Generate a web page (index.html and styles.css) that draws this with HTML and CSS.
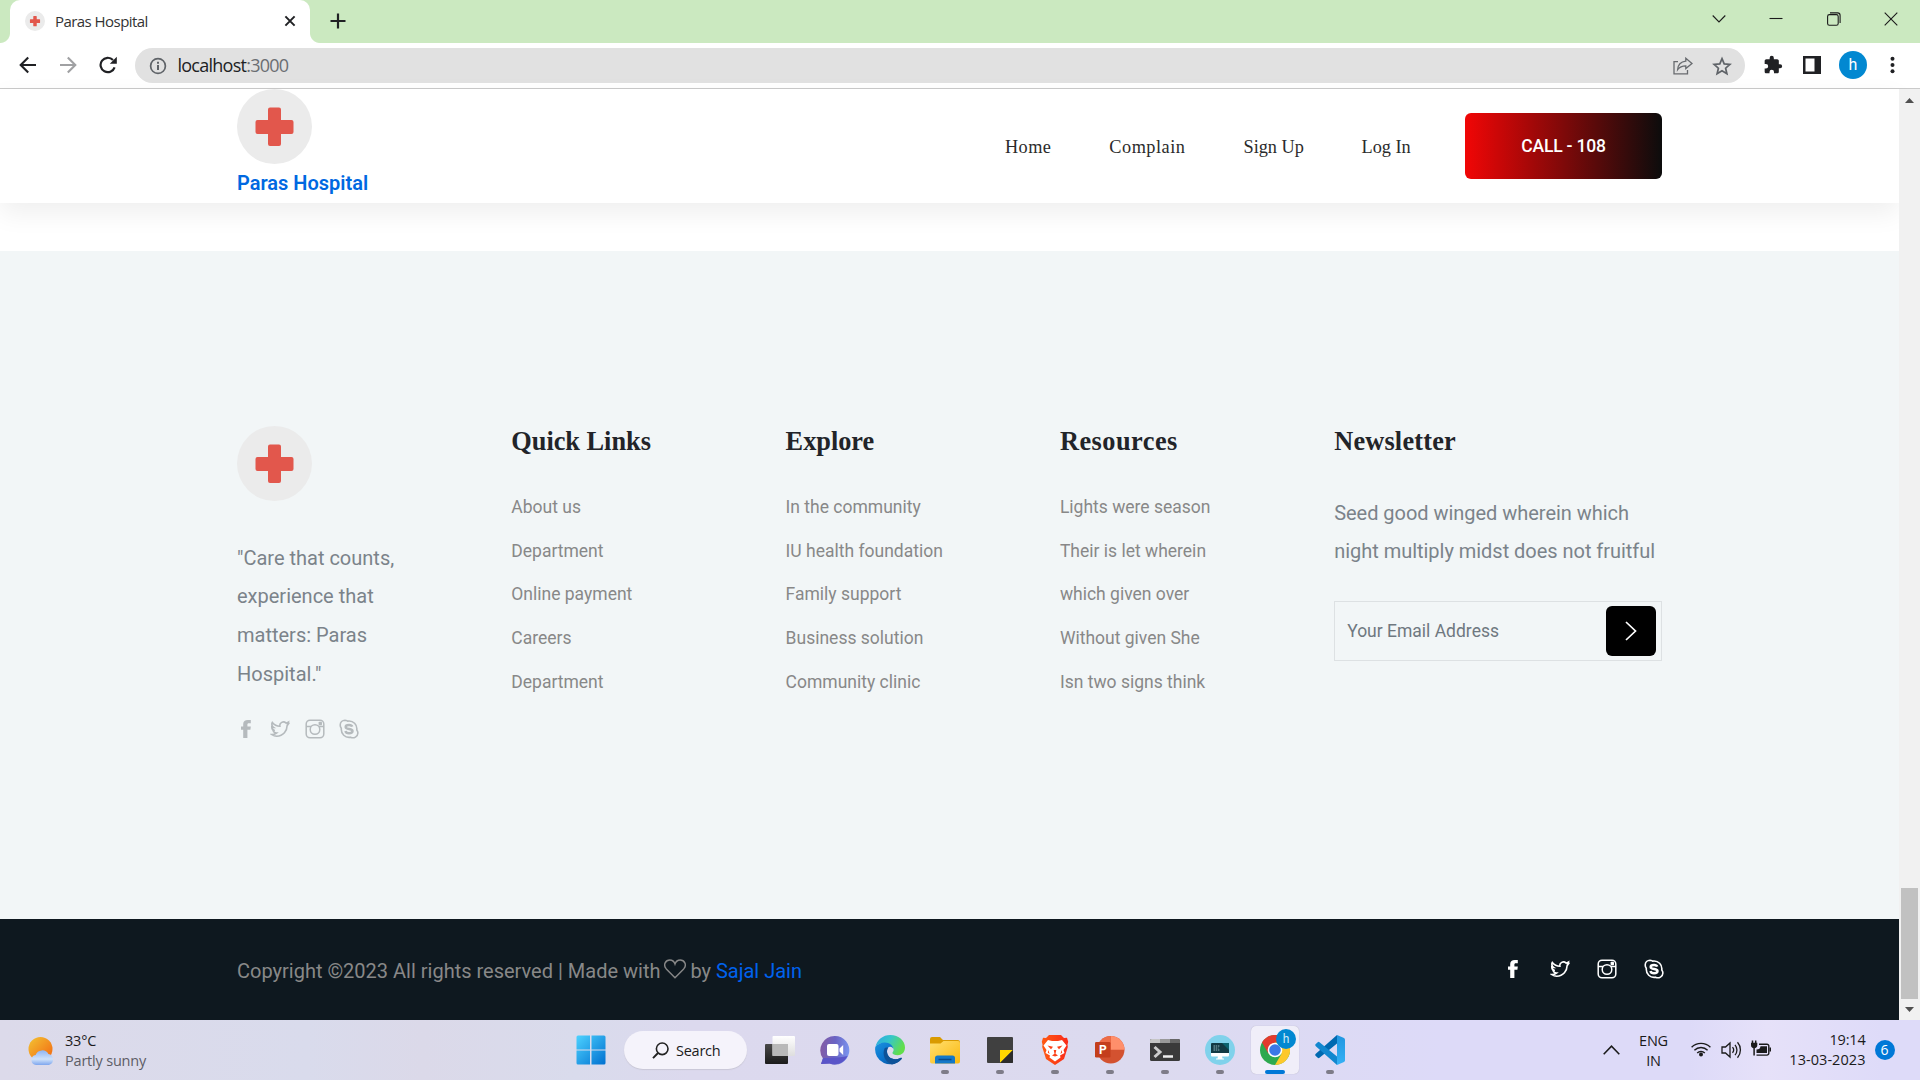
FILE: index.html
```html
<!DOCTYPE html>
<html lang="en">
<head>
<meta charset="utf-8">
<title>Paras Hospital</title>
<link rel="stylesheet" href="styles.css">
</head>
<body>
<svg class="defs" width="0" height="0" aria-hidden="true">
  <defs>
    <symbol id="logo" viewBox="0 0 75 75"><circle cx="37.5" cy="37.5" r="37.5" fill="#ebebeb"/><path d="M33 18.500h9a2 2 0 0 1 2 2V31h10.500a2 2 0 0 1 2 2v10a2 2 0 0 1-2 2H44v10a2 2 0 0 1-2 2h-9a2 2 0 0 1-2-2V45H20.500a2 2 0 0 1-2-2V33a2 2 0 0 1 2-2H31V20.500a2 2 0 0 1 2-2z" fill="#e2574c"/></symbol>
    <symbol id="facebook" viewBox="0 0 20 20"><path d="M14.800 1v3.300h-2c-1.100 0-1.400.6-1.400 1.400v1.700h3.400l-.4 3.400h-3V19H7.200v-8.200H5V7.400h2.200V5C7.200 2.400 9 1 11.800 1z" fill="currentColor"/></symbol>
    <symbol id="twitter" viewBox="-1.500 -1 27 26"><path d="M23.500 4.900a10 10 0 01-2.400.5 4.958 4.958 0 002-2.600c-.951.555-1.900.9-3 1.100a4.920 4.920 0 00-8.300 4.400C7.690 8.095 4.067 6.130 1.640 3.162a4.822 4.822 0 00-.666 2.475c0 1.710.87 3.213 2.188 4.096a4.904 4.904 0 01-2.228-.616v.06a4.923 4.923 0 003.946 4.827 4.996 4.996 0 01-2.212.085 4.936 4.936 0 004.604 3.417 9.867 9.867 0 01-6.102 2.105a13.995 13.995 0 006.400 2.100c9.053 0 13.998-7.496 13.998-13.985z" fill="none" stroke="currentColor" stroke-width="2.200"/></symbol>
    <symbol id="instagram" viewBox="0 0 20 20"><g fill="none" stroke="currentColor" stroke-width="1.500"><rect x="1.200" y="1.200" width="17.600" height="17.600" rx="3.800"/><circle cx="10" cy="10.500" r="4.800"/><path d="M1 7.500h5M14 7.500h5"/></g><rect x="13.600" y="2.800" width="3.400" height="3.400" rx=".8" fill="currentColor"/></symbol>
    <symbol id="skype" viewBox="0 0 20 20"><path d="M6 1.200c1.300 0 1.900.5 2.600.9 5.700-.9 9.900 3.700 9.200 8.800.6.700 1.100 1.700 1.100 3a5 5 0 0 1-7.300 4.300C6.200 19.100 1.800 15 2.300 9.300 1.600 8.500 1.200 7.200 1.200 6A4.900 4.900 0 0 1 6 1.200z" fill="none" stroke="currentColor" stroke-width="1.600"/><path d="M13.200 7.600C12.800 6.300 11.500 5.900 10 5.900c-1.900 0-3.300.7-3.300 2 0 3 6.800 1.200 6.800 4.100 0 1.400-1.500 2.200-3.500 2.200-1.800 0-3.200-.8-3.500-2.200" fill="none" stroke="currentColor" stroke-width="2.500"/></symbol>
    <linearGradient id="gWin" x1="0" y1="0" x2="1" y2="1"><stop offset="0" stop-color="#4dd2ff"/><stop offset="1" stop-color="#0070d0"/></linearGradient>
    <linearGradient id="gSun" x1="0" y1="0" x2="1" y2="1"><stop offset="0" stop-color="#f3c433"/><stop offset="1" stop-color="#f26410"/></linearGradient>
    <linearGradient id="gCloud" x1="0" y1="0" x2="0" y2="1"><stop offset="0" stop-color="#8fb5f3"/><stop offset=".6" stop-color="#cfe2fa"/><stop offset="1" stop-color="#7ea6ee"/></linearGradient>
    <linearGradient id="gDark" x1="0" y1="0" x2="0" y2="1"><stop offset="0" stop-color="#494949"/><stop offset="1" stop-color="#1b1b1b"/></linearGradient>
    <linearGradient id="gLight" x1="0" y1="0" x2="0" y2="1"><stop offset="0" stop-color="#fff"/><stop offset="1" stop-color="#dedede"/></linearGradient>
    <linearGradient id="gChat" x1="0" y1=".3" x2="1" y2=".4"><stop offset="0" stop-color="#845ba4"/><stop offset=".5" stop-color="#6a64c4"/><stop offset="1" stop-color="#7a94ee"/></linearGradient>
    <linearGradient id="gEdge" x1="0" y1="0" x2="1" y2=".4"><stop offset="0" stop-color="#2aa6e6"/><stop offset=".5" stop-color="#36c6c8"/><stop offset="1" stop-color="#62de4c"/></linearGradient>
    <linearGradient id="gEdge2" x1="0" y1="0" x2="1" y2="1"><stop offset="0" stop-color="#1b93df"/><stop offset=".5" stop-color="#0a72cc"/><stop offset="1" stop-color="#0d4a8c"/></linearGradient>
    <linearGradient id="gFold" x1="0" y1="0" x2="1" y2="1"><stop offset="0" stop-color="#ffdf70"/><stop offset="1" stop-color="#fbb90e"/></linearGradient>
    <linearGradient id="gBrave" x1="0" y1="0" x2="1" y2="0"><stop offset="0" stop-color="#ff5a12"/><stop offset="1" stop-color="#fa2a1a"/></linearGradient>
    <linearGradient id="gCode" x1="0" y1="0" x2="0" y2="1"><stop offset="0" stop-color="#2196e0"/><stop offset="1" stop-color="#35b1f5"/></linearGradient>
  </defs>
</svg>

<div class="tabstrip">
  <div class="tab">
    <svg class="favicon" width="20" height="20"><use href="#logo"/></svg>
    <span class="tab-title">Paras Hospital</span>
    <svg width="12" height="12" viewBox="0 0 12 12"><path d="M1.400 1.400l9.200 9.200M10.600 1.400l-9.200 9.200" stroke="#202124" stroke-width="2"/></svg>
  </div>
  <svg class="new-tab" width="16" height="16" viewBox="0 0 16 16"><path d="M8 .5v15M.5 8h15" stroke="#202124" stroke-width="2.200"/></svg>
  <div class="window-controls">
    <svg width="14" height="14" viewBox="0 0 14 14"><path d="M.7 3.500L7 9.900l6.300-6.400"/></svg>
    <svg width="14" height="14" viewBox="0 0 14 14"><path d="M.5 6.500h13"/></svg>
    <svg width="14" height="14" viewBox="0 0 14 14"><rect x=".6" y="2.600" width="10.600" height="10.600" rx="1.800"/><path d="M3 .9h7.600a2.500 2.500 0 0 1 2.500 2.500V11"/></svg>
    <svg width="14" height="14" viewBox="0 0 14 14"><path d="M.7.7l12.600 12.600M13.300.7L.7 13.300"/></svg>
  </div>
</div>

<div class="toolbar">
  <svg width="18" height="18" viewBox="0 0 18 18"><path d="M17 9H2.500M9.200 1.500L1.700 9l7.500 7.500" fill="none" stroke="#202124" stroke-width="2.100"/></svg>
  <svg width="18" height="18" viewBox="0 0 18 18"><path d="M1 9h14.500M8.800 1.500L16.300 9l-7.500 7.500" fill="none" stroke="#a0a1a3" stroke-width="2.100"/></svg>
  <svg width="18" height="18" viewBox="0 0 18 18"><path d="M15.600 11.300A7.200 7.200 0 1 1 14 4" fill="none" stroke="#202124" stroke-width="2.200"/><path d="M17.800.8v7h-7z" fill="#202124"/></svg>
  <div class="omnibox">
    <svg width="18" height="18" viewBox="0 0 18 18"><circle cx="9" cy="9" r="7.400" fill="none" stroke="#5f6368" stroke-width="1.700"/><path d="M9 8v5M9 4.800v2" stroke="#5f6368" stroke-width="2"/></svg>
    <span class="url">localhost<span class="port">:3000</span></span>
    <svg class="share" width="20" height="18" viewBox="0 0 20 18"><g fill="none" stroke="#686b6f" stroke-width="1.300"><path d="M5 4.700H1v12.200h13.500V13"/><path d="M12.800 1.200l6.200 5.200-6.200 5.200V8.800C9 8.800 6.500 10 4.600 12.700c.3-4.800 3-8 8.200-8.600z"/></g></svg>
    <svg width="20" height="20" viewBox="0 0 20 20"><path d="M10 2.600l2.200 5.300 5.700.5-4.300 3.800 1.300 5.600-4.900-3-4.900 3 1.300-5.600-4.300-3.800 5.700-.5z" fill="none" stroke="#5f6368" stroke-width="1.700"/></svg>
  </div>
  <svg class="puzzle" width="20" height="20" viewBox="0 0 24 24"><path d="M20.500 11H19V7c0-1.100-.9-2-2-2h-4V3.500a2.500 2.500 0 0 0-5 0V5H4c-1.100 0-2 .9-2 2v3.800h1.500a2.700 2.700 0 0 1 0 5.400H2V20c0 1.100.9 2 2 2h3.800v-1.500a2.700 2.700 0 0 1 5.400 0V22H17c1.100 0 2-.9 2-2v-4h1.500a2.500 2.500 0 0 0 0-5z" fill="#202124"/></svg>
  <svg class="panel" width="18" height="18" viewBox="0 0 18 18"><path d="M0 0h18v18H0zM2.500 2.500v13H11.500v-13z" fill="#202124" fill-rule="evenodd"/></svg>
  <span class="avatar">h</span>
  <svg class="dots" width="5" height="18" viewBox="0 0 5 18"><g fill="#202124"><circle cx="2.500" cy="2.700" r="2"/><circle cx="2.500" cy="9" r="2"/><circle cx="2.500" cy="15.300" r="2"/></g></svg>
</div>

<div class="viewport">
  <div class="page">
    <header class="site-header">
      <a class="brand"><svg width="75" height="75"><use href="#logo"/></svg><span>Paras Hospital</span></a>
      <nav class="nav"><a class="home">Home</a><a class="complain">Complain</a><a>Sign Up</a><a>Log In</a></nav>
      <a class="call">CALL - 108</a>
    </header>
    <footer class="site-footer">
      <div class="columns">
        <div class="about">
          <svg width="75" height="75"><use href="#logo"/></svg>
          <p>"Care that counts, experience that matters: Paras Hospital."</p>
          <div class="social">
            <svg><use href="#facebook"/></svg><svg><use href="#twitter"/></svg><svg><use href="#instagram"/></svg><svg><use href="#skype"/></svg>
          </div>
        </div>
        <div><h4>Quick Links</h4><ul><li>About us</li><li>Department</li><li>Online payment</li><li>Careers</li><li>Department</li></ul></div>
        <div><h4>Explore</h4><ul><li>In the community</li><li>IU health foundation</li><li>Family support</li><li>Business solution</li><li>Community clinic</li></ul></div>
        <div class="resources"><h4>Resources</h4><ul><li>Lights were season</li><li>Their is let wherein</li><li>which given over</li><li>Without given She</li><li>Isn two signs think</li></ul></div>
        <div class="newsletter">
          <h4>Newsletter</h4>
          <p>Seed good winged wherein which night multiply midst does not fruitful</p>
          <div class="subscribe"><span>Your Email Address</span><b><svg width="12" height="20" viewBox="0 0 12 20"><path d="M1 1l9.500 9L1 19" fill="none" stroke="#fff" stroke-width="1.700"/></svg></b></div>
        </div>
      </div>
    </footer>
    <div class="copyright">
      <p>Copyright ©2023 All rights reserved | Made with <svg width="22" height="20" viewBox="0 0 22 20"><path d="M11 18.700L2.300 9.900C-1.300 5.800 1.700 1 5.800 1 8.500 1 10.200 2.700 11 5c.8-2.300 2.500-4 5.200-4 4.100 0 7.100 4.800 3.500 8.900z" fill="none" stroke="#888" stroke-width="1.400"/></svg> by <a>Sajal Jain</a></p>
      <div class="social">
        <svg><use href="#facebook"/></svg><svg><use href="#twitter"/></svg><svg><use href="#instagram"/></svg><svg><use href="#skype"/></svg>
      </div>
    </div>
  </div>
  <div class="scrollbar">
    <svg width="9" height="5" viewBox="0 0 9 5"><path d="M0 5l4.500-5L9 5z" fill="#505050"/></svg>
    <i></i>
    <svg width="9" height="5" viewBox="0 0 9 5"><path d="M0 0h9L4.500 5z" fill="#505050"/></svg>
  </div>
</div>

<div class="taskbar">
  <div class="weather">
    <svg width="28" height="30" viewBox="0 0 28 30"><circle cx="12.500" cy="13" r="12" fill="url(#gSun)"/><path d="M8 29a5 5 0 0 1-.4-9.900 7 7 0 0 1 12.800-1A5.600 5.600 0 0 1 21 29z" fill="url(#gCloud)"/></svg>
    <div><span>33°C</span><span class="muted">Partly sunny</span></div>
  </div>
  <div class="apps">
    <span class="app"><svg width="30" height="30" viewBox="0 0 30 30"><path d="M2 .5h12v14H.5V2A1.500 1.500 0 0 1 2 .5zM15.500.5H28A1.500 1.500 0 0 1 29.500 2v12.500h-14zM.5 15.500H14v14H2A1.500 1.500 0 0 1 .5 28zM15.500 15.500h14V28a1.500 1.500 0 0 1-1.500 1.500H15.500z" fill="url(#gWin)"/></svg></span>
    <span class="search"><svg width="17" height="17" viewBox="0 0 17 17"><circle cx="10.200" cy="6.800" r="5.800" fill="none" stroke="#222" stroke-width="1.600"/><path d="M6 11L1 16.200" stroke="#222" stroke-width="1.900"/></svg><span>Search</span></span>
    <span class="app"><svg width="30" height="30" viewBox="0 0 30 30"><rect x="0" y="9" width="23" height="20" rx="1" fill="url(#gDark)"/><rect x="7.500" y="1" width="22.500" height="20" rx="1" fill="url(#gLight)"/><path d="M7.500 9H23v12H7.500z" fill="#b9b9b9"/></svg></span>
    <span class="app"><svg width="30" height="30" viewBox="0 0 30 30"><path d="M15 1a14.300 14.300 0 1 1-5.500 27.500L1 29l2-5.500A14.300 14.300 0 0 1 15 1z" fill="url(#gChat)"/><path d="M1 29l2-6c6 0 14 0 24.500-2A14.300 14.300 0 0 1 9.500 28.500z" fill="#5a55c8"/><rect x="7" y="9" width="11.500" height="12" rx="2" fill="#fff"/><path d="M19.500 13.500l3.700-3.500v10l-3.700-3.500z" fill="#fff"/></svg></span>
    <span class="app"><svg width="30" height="30" viewBox="0 0 30 30"><path d="M.4 12C2 4.800 8 0 15.200 0 24 0 30 6 30 12.500c0 5-3.500 7.700-7.300 7.700-3 0-5.300-1-5.300-2.200 0-.8 1.200-1.400 1.200-3.300C18.600 11.500 15 8 9.800 8 5.500 8 2 9.500.4 12z" fill="url(#gEdge)"/><path d="M.3 12C2.500 9 6 7.500 9.800 7.500c5.200 0 8.300 3.200 8.600 6.500-.8-1.500-2-2.200-3.200-2.200-2 0-3.200 2-3.200 4.700 0 5.500 6 10 13.500 6.500.9-.4 1.600.2 1.100 1A15 15 0 0 1 .3 12z" fill="url(#gEdge2)"/><path d="M9.500 13.500C7 19 9.500 27 17 29.500c4-.5 7.500-2.700 9.600-5.500.5-.8-.2-1.400-1.100-1-7.500 3.500-13.500-1-13.500-6.500 0-1.500.4-3 1.200-3.800-1.500-.5-3 0-3.700.8z" fill="#0e5298"/></svg></span>
    <span class="app open"><svg width="30" height="30" viewBox="0 0 30 30"><path d="M0 4a2 2 0 0 1 2-2h8l3 3h15a2 2 0 0 1 2 2v8H0z" fill="#d99a00"/><path d="M0 8.500h10.500L13.500 6H28a2 2 0 0 1 2 2v18.500a2 2 0 0 1-2 2H2a2 2 0 0 1-2-2z" fill="url(#gFold)"/><path d="M5 28.500V23a2.500 2.500 0 0 1 2.500-2.500h15A2.500 2.500 0 0 1 25 23v5.500z" fill="#1478c8"/><path d="M8.500 24.500h13" stroke="#0a4a8a" stroke-width="1.500"/></svg></span>
    <span class="app open"><svg width="30" height="30" viewBox="0 0 30 30"><rect x="2" y="2" width="26" height="26" rx="1" fill="#404040"/><path d="M15 15h13L15 28z" fill="#ffd800"/><path d="M28 15v12a1 1 0 0 1-1 1H15z" fill="#2c2c2c"/></svg></span>
    <span class="app open"><svg width="30" height="30" viewBox="0 0 30 30"><path d="M9 0h12l3 3 3-.2 1.200 4-.7 2.700.3 2.500L24 24l-9 6-9-6L2.200 12l.3-2.500-.7-2.700L3 2.800 6 3z" fill="url(#gBrave)"/><path d="M8 5l4 1h6l4-1 4.500 5.500-3 4.500 1 3-4.500 2.500.5 2-5.500 4-5.500-4 .5-2L5.500 18l1-3-3-4.500z" fill="#fff"/><path d="M7.500 10.500l5.500 1.200-2 2.500zM22.500 10.500L17 11.700l2 2.500zM13.700 15h2.600l-.8 3.800 2.500 1.600-3 1.200-3-1.200 2.500-1.600zM8.500 15l1 4-1.700-1.500zM21.500 15l-1 4 1.700-1.500z" fill="#fb4119"/></svg></span>
    <span class="app open"><svg width="30" height="30" viewBox="0 0 30 30"><circle cx="15.800" cy="14.800" r="13.700" fill="#d35230"/><path d="M15.800 1.100a13.700 13.700 0 0 1 13.700 13.700H15.800z" fill="#ff8f6b"/><path d="M15.800 1.100v13.700H2.100A13.700 13.700 0 0 1 15.800 1.100z" fill="#ed6c47"/><rect x="0" y="7" width="15.500" height="15.500" rx="1.300" fill="#c43e1c"/><text x="4" y="19" class="glyph">P</text></svg></span>
    <span class="app open"><svg width="30" height="30" viewBox="0 0 30 30"><rect y="4" width="30" height="22" rx="1.500" fill="#3a3a3a"/><path d="M1.500 4H10v4H0V5.500A1.500 1.500 0 0 1 1.500 4z" fill="#c6c6c6"/><path d="M10 4h10v4H10z" fill="#999"/><path d="M20 4h8.500A1.500 1.500 0 0 1 30 5.500V8H20z" fill="#666"/><path d="M4.500 12l5.500 5-5.500 5" fill="none" stroke="#ccc" stroke-width="3"/><path d="M13 21.500h10" stroke="#eee" stroke-width="2.500"/></svg></span>
    <span class="app open"><svg width="30" height="30" viewBox="0 0 30 30"><circle cx="15" cy="15" r="15" fill="#80d2eb"/><rect x="6" y="8" width="18" height="13" rx="1" fill="#123a44"/><path d="M17 8h7v7z" fill="#0b6470"/><path d="M6 18h18v2.500a1 1 0 0 1-1 1H7a1 1 0 0 1-1-1zM13 21h4l.5 2.500H19v1h-8v-1h1.500z" fill="#fff"/><path d="M8.500 11h6M8.500 13h5M8.500 15h6" stroke="#b6d5da" stroke-width=".8" stroke-dasharray="1.500 .7"/></svg></span>
    <span class="app open active"><i class="tile"><svg width="30" height="30" viewBox="0 0 30 30"><circle cx="15" cy="15" r="15" fill="#2da94f"/><path d="M2 7.500A15 15 0 0 1 28 7.500H15L8.500 18.700z" fill="#e33b2e"/><path d="M28 7.500A15 15 0 0 1 15 30l6.500-11.200L15 7.500z" fill="#fdc82b"/><circle cx="15" cy="15" r="7.300" fill="#fff"/><circle cx="15" cy="15" r="5.800" fill="#3b78e7"/></svg><em>h</em></i></span>
    <span class="app open"><svg width="30" height="30" viewBox="0 0 30 30"><path d="M22 0v8.500L4.500 22.800a1.500 1.500 0 0 1-1.800 0L.8 21a1.500 1.500 0 0 1 0-2.200z" fill="#0069b0"/><path d="M22 30v-8.500L4.500 7.200a1.500 1.500 0 0 0-1.800 0L.8 9a1.500 1.500 0 0 0 0 2.200z" fill="#1287cf"/><path d="M22 0l7 3c.6.300 1 .9 1 1.500v21c0 .6-.4 1.200-1 1.500l-7 3z" fill="url(#gCode)"/></svg></span>
  </div>
  <div class="tray">
    <svg width="17" height="10" viewBox="0 0 17 10"><path d="M.7 9.200l7.800-8 7.800 8" fill="none" stroke="#1b1b1b" stroke-width="1.600"/></svg>
    <div class="lang"><span>ENG</span><span>IN</span></div>
    <svg class="wifi" width="20" height="16" viewBox="0 0 20 16"><g fill="none" stroke="#1b1b1b" stroke-width="1.400"><path d="M.6 6.300a13.200 13.200 0 0 1 18.800 0M3.400 9.200a9.300 9.300 0 0 1 13.200 0M6.200 12a5.400 5.400 0 0 1 7.600 0"/></g><circle cx="10" cy="13.500" r="2" fill="#1b1b1b"/></svg>
    <svg class="volume" width="21" height="18" viewBox="0 0 21 18"><g fill="none" stroke="#1b1b1b" stroke-width="1.300"><path d="M1 6h3.500L9 2v14l-4.500-4H1z"/><path d="M11.500 6.200a4.300 4.300 0 0 1 0 5.600M14 3.800a8 8 0 0 1 0 10.400M16.500 1.300a11.600 11.600 0 0 1 0 15.400"/></g></svg>
    <svg class="battery" width="20" height="17" viewBox="0 0 20 17"><path d="M8 4.200h8a1.800 1.800 0 0 1 1.800 1.800v7.300a1.800 1.800 0 0 1-1.800 1.800H5.500" fill="none" stroke="#1b1b1b" stroke-width="1.400"/><path d="M9.500 6.200H16v6.900H5.500V9.500c2.500 0 4-1.300 4-3.300z" fill="#1b1b1b"/><path d="M1.500.5v2.500M4.700.5v2.500M3.100 7v8.500" fill="none" stroke="#1b1b1b" stroke-width="1.500"/><path d="M0 2.800h6.300V5a3.100 3.100 0 0 1-6.300 0z" fill="#1b1b1b"/><path d="M18.500 7.500H20v4h-1.500z" fill="#1b1b1b"/></svg>
    <div class="clock"><span>19:14</span><span class="date">13-03-2023</span></div>
    <span class="badge">6</span>
  </div>
</div>
</body>
</html>
```
FILE: styles.css
```css
* { box-sizing: border-box; }
body { margin: 0; width: 1920px; height: 1080px; overflow: hidden; display: flex; flex-direction: column; background: #fff; font-family: Roboto, sans-serif; }
svg { display: block; flex: none; }
p, h4, ul { margin: 0; padding: 0; }
ul { list-style: none; }

/* Browser chrome */
.tabstrip { height: 43px; flex: none; background: #cbe9c0; display: flex; align-items: flex-start; padding-left: 10px; }
.tab { width: 300px; height: 43px; background: #fff; border-radius: 10px 10px 0 0; display: flex; align-items: center; padding: 0 14px 1px 15px; position: relative; }
.tab::before, .tab::after { content: ""; position: absolute; bottom: 0; width: 10px; height: 10px; }
.tab::before { left: -10px; background: radial-gradient(circle at 0 0, #cbe9c0 9.500px, #fff 10.500px); }
.tab::after { right: -10px; background: radial-gradient(circle at 100% 0, #cbe9c0 9.500px, #fff 10.500px); }
.tab-title { flex: 1; margin-left: 10px; padding-bottom: 1px; font: 15px/20px "Open Sans", sans-serif; letter-spacing: -.55px; color: #333; }
.new-tab { margin: 13px 0 0 19.500px; }
.window-controls { margin: 12px 22px 0 auto; display: flex; gap: 43.300px; fill: none; stroke: #1b1b1b; stroke-width: 1.100; }
.toolbar { height: 46px; flex: none; border-bottom: 1px solid #cacaca; display: flex; align-items: center; padding: 0 25px 1px 18.500px; }
.toolbar > svg:nth-child(2), .toolbar > svg:nth-child(3) { margin-left: 22px; }
.omnibox { width: 1610px; height: 35px; margin: 1px 0 0 18.500px; border-radius: 18px; background: #e1e1e1; display: flex; align-items: center; padding: 0 13px 0 13.500px; }
.url { flex: 1; margin-left: 11px; padding-bottom: 1px; font: 18px/30px "Open Sans", sans-serif; letter-spacing: -.75px; color: #202124; }
.port { color: #6b6e72; }
.share { margin-right: 19.500px; }
.puzzle { margin-left: 18px; }
.panel { margin-left: 20px; }
.avatar { width: 28px; height: 28px; margin: 0 auto 0 18px; border-radius: 50%; background: #0288d1; color: #fff; font: 16px/28px Roboto, sans-serif; text-align: center; }

/* Web page */
.viewport { height: 931px; flex: none; display: flex; }
.page { width: 1899px; display: flex; flex-direction: column; }
.site-header { height: 114px; flex: none; padding: 0 237px; display: flex; box-shadow: 0 10px 25px rgba(0, 0, 0, .065); }
.brand { width: 768px; display: flex; flex-direction: column; }
.brand span { margin-top: 7px; font-weight: 600; font-size: 20px; line-height: 24px; color: #0068e1; }
.nav { display: grid; grid-template-columns: 104.300px 134.200px 118px 103.500px; padding-top: 46px; font: 18.300px/24px "Liberation Serif", serif; color: #2b2b2b; }
.nav .home { letter-spacing: .4px; }
.nav .complain { letter-spacing: .5px; }
.call { width: 197px; height: 66px; margin-top: 24px; padding: 0 20px; border-radius: 6px; background: linear-gradient(90deg, #f10606, #0c0c0c); color: #fff; font-size: 17.500px; line-height: 66px; font-weight: 500; letter-spacing: -.2px; text-align: center; }
.site-footer { height: 668px; flex: none; margin-top: 48px; padding: 175px 237px 0; background: #f2f6f7; }
.columns { display: grid; grid-template-columns: repeat(4, 274.300px) 1fr; }
.about p, .newsletter p { font-size: 20px; line-height: 38.750px; color: #7b838a; }
.about p { width: 180px; margin-top: 37.500px; }
.social { display: flex; color: #b5babd; }
.social svg { width: 20px; height: 20px; }
.about .social { margin: 25.500px 0 0 -1px; gap: 14.400px; }
h4 { font: bold 26.300px/32px "Liberation Serif", serif; color: #222429; }
.resources h4 { letter-spacing: .5px; }
.newsletter h4 { letter-spacing: .2px; }
.columns ul { margin-top: 27.900px; font-size: 17.500px; line-height: 43.750px; color: #888; }
.newsletter p { margin: 35.600px -10px 0 0; line-height: 38.400px; letter-spacing: -.03px; }
.subscribe { width: 328px; height: 60px; margin-top: 31px; border: 1px solid #dde1e3; display: flex; align-items: center; justify-content: space-between; padding: 0 5px 0 12px; font-size: 17.500px; color: #6f7880; }
.subscribe b { width: 50px; height: 50px; border-radius: 6px; background: #000; display: flex; align-items: center; justify-content: center; }
.copyright { height: 101px; flex: none; padding: 0 235px 0 237px; background: #0e181f; display: flex; align-items: center; justify-content: space-between; }
.copyright p { font-size: 20px; line-height: 30px; color: #888; padding-top: 2px; }
.copyright p svg { display: inline-block; margin: 0 -1px; vertical-align: -1px; }
.copyright a { color: #0062ee; }
.copyright .social { color: #fff; gap: 27px; padding-bottom: 2px; }
.scrollbar { width: 21px; background: #f1f1f1; display: flex; flex-direction: column; align-items: center; padding: 9px 0 8px; }
.scrollbar i { width: 17px; height: 111px; background: #c1c1c1; margin: auto 0 8px; }

/* Taskbar */
.taskbar { height: 60px; flex: none; display: flex; font: 14.500px/20px "Open Sans", sans-serif; color: #1b1b1b; background: linear-gradient(90deg, #dcdaea, #d9dbec 16%, #dbd9e9 22%, #d9dbec 30%, #dcd9ee 36%, #dcdaef 60%, #dddaf8 75%, #dddaf8 88%, #e6e1f9 92%, #dedbf9 98%); }
.weather { width: 563.500px; padding: 11px 0 0 28px; display: flex; gap: 9px; }
.weather svg { margin-top: 5px; }
.weather div { display: flex; flex-direction: column; letter-spacing: -.2px; }
.muted { color: #5d5d66; }
.apps { width: 1039px; display: flex; }
.app { width: 55px; height: 60px; display: flex; flex-direction: column; align-items: center; padding-top: 15px; }
.open::after { content: ""; width: 8px; height: 4px; margin-top: 5px; border-radius: 2px; background: #7e7c88; }
.active { padding-top: 6px; }
.active::after { width: 20px; margin-top: -4px; background: #0078d7; z-index: 1; }
.tile { width: 48px; height: 48px; padding: 9px; border-radius: 5px; background: #f0eef9; position: relative; box-shadow: 0 0 1px #aaa8b8; }
.tile em { position: absolute; right: 3px; top: 3px; width: 20px; height: 20px; border-radius: 50%; background: #0288d1; color: #cfe8f6; font: 12px/20px Roboto, sans-serif; text-align: center; }
.search { width: 123px; height: 38px; margin: 11px 5.500px 0 5.500px; border-radius: 19px; background: #f5f3fb; box-shadow: 0 1px 1px #c9c7d6; display: flex; align-items: center; gap: 7px; padding-left: 28px; letter-spacing: -.25px; }
.search span { padding-top: 1px; }
.glyph { font: bold 12px Roboto, sans-serif; fill: #fff; }
.tray { flex: 1; display: flex; align-items: flex-start; padding-top: 10px; letter-spacing: -.2px; }
.tray > svg { margin-top: 15px; }
.lang, .clock { display: flex; flex-direction: column; }
.lang { width: 40px; margin-left: 14px; padding-top: 1px; align-items: center; }
.tray .wifi { margin: 11px 0 0 17px; }
.tray .volume { margin: 11px 0 0 10px; }
.tray .battery { margin: 10px 0 0 9px; }
.clock { width: 95px; align-items: flex-end; }
.date { letter-spacing: .05px; }
.badge { width: 20px; height: 20px; margin: 10px 0 0 9px; border-radius: 50%; background: #0078d7; color: #fff; font-size: 14px; text-align: center; }
```
